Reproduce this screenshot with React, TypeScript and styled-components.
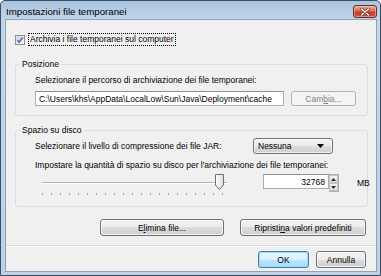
import React, { useState } from 'react'
import styled, { createGlobalStyle, css } from 'styled-components'

const GlobalStyle = createGlobalStyle`
  html, body {
    margin: 0;
    padding: 0;
    background: #ffffff;
  }
  body {
    font-family: "Liberation Sans", Arial, sans-serif;
    font-size: 8.5px;
    color: #000;
  }
  * { box-sizing: border-box; }
`

const Window = styled.div`
  width: 381px;
  height: 276px;
  display: flex;
  flex-direction: column;
  border: 1px solid #3b4d63;
  border-radius: 5px 5px 0 0;
  background: linear-gradient(#a9c3df, #c2d7ec 20px, #bcd2e9);
  padding: 0 3px 3px 4px;
`

const TitleBar = styled.div`
  height: 18px;
  display: flex;
  align-items: flex-start;
  justify-content: space-between;
  padding-left: 1px;
`

const Title = styled.span`
  font-size: 9.7px;
  line-height: 12px;
  margin-top: 5px;
  color: #000;
`

const CloseButton = styled.div`
  width: 24px;
  height: 13px;
  margin-top: 4px;
  border: 1px solid #6b2a21;
  border-radius: 3px;
  background: linear-gradient(#e8a596, #d2715e 45%, #bf3e2b 55%, #c9573f);
  display: flex;
  align-items: center;
  justify-content: center;
  box-shadow: inset 0 0 0 1px rgba(255, 220, 210, 0.45);
`

const Client = styled.div`
  flex: 1;
  display: flex;
  flex-direction: column;
  background: #f0f0f0;
  border: 1px solid #8ea2b8;
  padding: 0 8px 0 9px;
`

const CheckRow = styled.label`
  display: flex;
  align-items: center;
  margin-top: 13px;
  height: 13px;
`

const FocusLabel = styled.span`
  margin-left: 4px;
  padding: 0 1px;
  line-height: 11px;
  outline: 1px dotted #000;
`

const Group = styled.div<{ $top: number; $bottom: number }>`
  margin-top: ${({ $top }) => $top}px;
  padding: 0 12px ${({ $bottom }) => $bottom}px 19px;
  border: 1px solid #d5dfe5;
  border-radius: 3px;
`

const GroupTitle = styled.div`
  width: fit-content;
  margin: -7px 0 0 -15px;
  padding: 0 2px;
  line-height: 12px;
  background: #f0f0f0;
`

const Line = styled.div<{ $mt?: number }>`
  line-height: 12px;
  margin-top: ${({ $mt }) => $mt || 0}px;
  white-space: nowrap;
`

const PathRow = styled.div`
  display: flex;
  gap: 7px;
  margin-top: 5px;
`

const TextField = styled.div<{ $width: number; $align?: string }>`
  width: ${({ $width }) => $width}px;
  height: 15px;
  flex-shrink: 0;
  border: 1px solid #abadb3;
  border-top-color: #8e8f94;
  background: #fff;
  display: flex;
  align-items: center;
  justify-content: ${({ $align }) => ($align === 'right' ? 'flex-end' : 'flex-start')};
  padding: 0 3px;
  white-space: nowrap;
  overflow: hidden;
`

const buttonLook = css`
  border: 1px solid #707070;
  border-radius: 3px;
  background: linear-gradient(#f2f2f2, #ebebeb 50%, #dddddd 50%, #cfcfcf);
  box-shadow: inset 0 0 0 1px rgba(255, 255, 255, 0.7);
`

const Button = styled.div<{ $width: number; $disabled?: boolean; $default?: boolean }>`
  ${buttonLook};
  width: ${({ $width }) => $width}px;
  height: 17px;
  flex-shrink: 0;
  display: flex;
  align-items: center;
  justify-content: center;
  white-space: nowrap;
  ${({ $disabled }) =>
    $disabled &&
    css`
      height: 15px;
      border-color: #adb2b5;
      background: #f4f4f4;
      color: #838383;
      box-shadow: none;
    `}
  ${({ $default }) =>
    $default &&
    css`
      border-color: #3c7fb1;
      box-shadow: inset 0 0 0 1px #9fdbf7;
      background: linear-gradient(#eaf6fd, #d9f0fc 50%, #bee6fd 50%, #a7d9f5);
    `}
`

const JarRow = styled.div`
  display: grid;
  grid-template-columns: 218px 80px;
  align-items: center;
  margin-top: 2px;
`

const Combo = styled.div`
  ${buttonLook};
  height: 16px;
  display: flex;
  align-items: center;
  justify-content: space-between;
  padding: 0 8px 0 4px;
`

const SliderRow = styled.div`
  display: flex;
  align-items: flex-start;
  margin-top: 3px;
`

const Slider = styled.div`
  width: 192px;
  height: 22px;
  flex-shrink: 0;
  margin-left: 3px;
  position: relative;
`

const Track = styled.div`
  position: absolute;
  left: 4px;
  right: 3px;
  top: 8px;
  height: 2px;
  border-top: 1px solid #b3b3b3;
  border-bottom: 1px solid #ffffff;
`

const Ticks = styled.div`
  position: absolute;
  left: 4px;
  right: 7px;
  top: 19px;
  display: flex;
  justify-content: space-between;
`

const Tick = styled.span`
  width: 1px;
  height: 2px;
  background: #a0a0a0;
`

const Thumb = styled.svg`
  position: absolute;
  top: 0;
  left: 177px;
`

const Spin = styled.div`
  display: flex;
  flex-shrink: 0;
  margin-left: 33px;
  height: 18px;
`

const SpinArrows = styled.div`
  width: 10px;
  display: flex;
  flex-direction: column;
  border: 1px solid #abadb3;
  border-left: none;
  background: #fff;
`

const SpinHalf = styled.div`
  flex: 1;
  display: flex;
  align-items: center;
  justify-content: center;
  background: linear-gradient(#f3f3f3, #dcdcdc);
  border: 1px solid #c3c3c3;
`

const Unit = styled.span`
  flex-shrink: 0;
  margin-left: 18px;
  line-height: 18px;
`

const ButtonRow = styled.div<{ $mt: number; $gap: number; $pr: number }>`
  display: flex;
  justify-content: flex-end;
  gap: ${({ $gap }) => $gap}px;
  margin-top: ${({ $mt }) => $mt}px;
  padding-right: ${({ $pr }) => $pr}px;
`

const Separator = styled.div`
  margin: 9px -8px 0 -9px;
  height: 2px;
  border-top: 1px solid #d8d8d8;
  border-bottom: 1px solid #ffffff;
`

const Mnemonic = styled.span`
  text-decoration: underline;
`

function CheckBox() {
  return (
    <svg width="10" height="10" viewBox="0 0 10 10">
      <defs>
        <linearGradient id="cb" x1="0" y1="0" x2="1" y2="1">
          <stop offset="0" stopColor="#cbcfd5" />
          <stop offset="1" stopColor="#f6f6f6" />
        </linearGradient>
      </defs>
      <rect x="0.5" y="0.5" width="9" height="9" fill="#f4f4f4" stroke="#8e8f8f" />
      <rect x="1.5" y="1.5" width="7" height="7" fill="url(#cb)" />
      <path d="M2.4 5.2 L4.2 7.2 L7.8 2.4" fill="none" stroke="#4a5f97" strokeWidth="1.4" />
    </svg>
  )
}

export default function App() {
  const [checked] = useState(true)
  const ticks = Array.from({ length: 21 })

  return (
    <>
      <GlobalStyle />
      <Window>
        <TitleBar>
          <Title>Impostazioni file temporanei</Title>
          <CloseButton>
            <svg width="10" height="8" viewBox="0 0 10 8">
              <path d="M1.5 1 L8.5 7 M8.5 1 L1.5 7" stroke="#5a1d16" strokeWidth="2.6" strokeLinecap="round" />
              <path d="M1.5 1 L8.5 7 M8.5 1 L1.5 7" stroke="#ffffff" strokeWidth="1.5" strokeLinecap="round" />
            </svg>
          </CloseButton>
        </TitleBar>
        <Client>
          <CheckRow>
            {checked && <CheckBox />}
            <FocusLabel>Archivia i file temporanei sul computer</FocusLabel>
          </CheckRow>

          <Group $top={18} $bottom={9}>
            <GroupTitle>Posizione</GroupTitle>
            <Line $mt={4}>Selezionare il percorso di archiviazione dei file temporanei:</Line>
            <PathRow>
              <TextField $width={249}>C:\Users\khs\AppData\LocalLow\Sun\Java\Deployment\cache</TextField>
              <Button $width={65} $disabled>
                Cam<Mnemonic>b</Mnemonic>ia...
              </Button>
            </PathRow>
          </Group>

          <Group $top={14} $bottom={10}>
            <GroupTitle>Spazio su disco</GroupTitle>
            <JarRow>
              <span>Selezionare il livello di compressione dei file JAR:</span>
              <Combo>
                <span>Nessuna</span>
                <svg width="7" height="4" viewBox="0 0 7 4">
                  <path d="M0 0 H7 L3.5 4 Z" fill="#000" />
                </svg>
              </Combo>
            </JarRow>
            <Line $mt={5}>Impostare la quantità di spazio su disco per l'archiviazione dei file temporanei:</Line>
            <SliderRow>
              <Slider>
                <Track />
                <Ticks>
                  {ticks.map((_, i) => (
                    <Tick key={i} />
                  ))}
                </Ticks>
                <Thumb width="9" height="16" viewBox="0 0 9 16">
                  <defs>
                    <linearGradient id="th" x1="0" y1="0" x2="1" y2="0">
                      <stop offset="0" stopColor="#fdfdfd" />
                      <stop offset="1" stopColor="#dcdcdc" />
                    </linearGradient>
                  </defs>
                  <path d="M0.5 0.5 H8.5 V11 L4.5 15.5 L0.5 11 Z" fill="url(#th)" stroke="#6f6f6f" />
                </Thumb>
              </Slider>
              <Spin>
                <TextField $width={66} $align="right">32768</TextField>
                <SpinArrows>
                  <SpinHalf>
                    <svg width="5" height="3" viewBox="0 0 5 3">
                      <path d="M0 3 L2.5 0 L5 3 Z" fill="#333" />
                    </svg>
                  </SpinHalf>
                  <SpinHalf>
                    <svg width="5" height="3" viewBox="0 0 5 3">
                      <path d="M0 0 L2.5 3 L5 0 Z" fill="#333" />
                    </svg>
                  </SpinHalf>
                </SpinArrows>
              </Spin>
              <Unit>MB</Unit>
            </SliderRow>
          </Group>

          <ButtonRow $mt={12} $gap={16} $pr={2}>
            <Button $width={124}>
              E<Mnemonic>l</Mnemonic>imina file...
            </Button>
            <Button $width={126}>
              Ripristi<Mnemonic>n</Mnemonic>a valori predefiniti
            </Button>
          </ButtonRow>
          <Separator />
          <ButtonRow $mt={4} $gap={7} $pr={2}>
            <Button $width={51} $default>
              OK
            </Button>
            <Button $width={50}>Annulla</Button>
          </ButtonRow>
        </Client>
      </Window>
    </>
  )
}
